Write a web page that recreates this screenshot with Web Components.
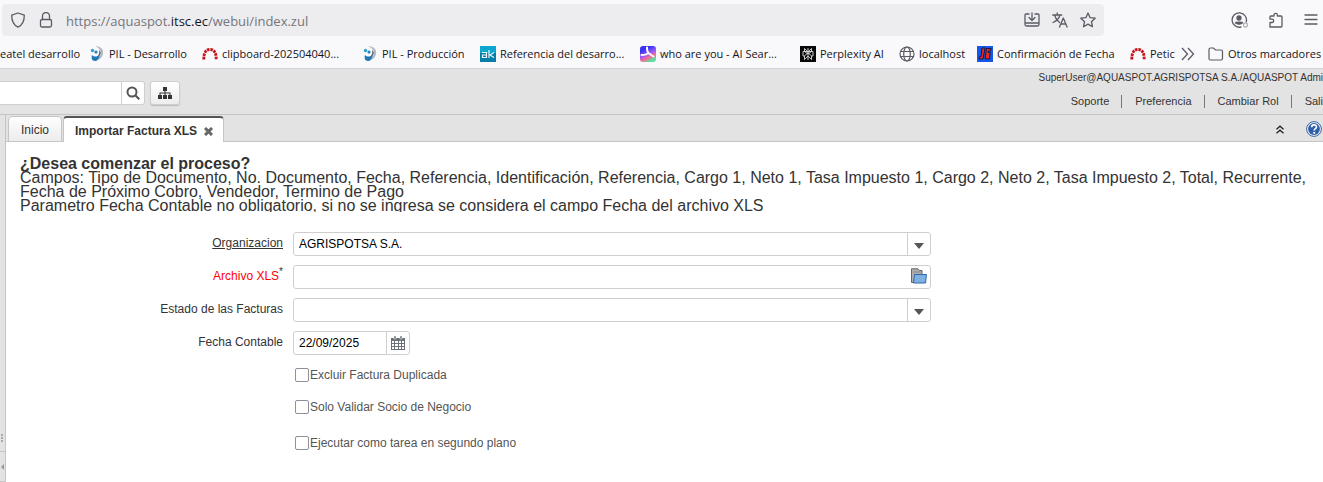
<!DOCTYPE html>
<html lang="es">
<head>
<meta charset="utf-8">
<title>Importar Factura XLS</title>
<style>
  html, body {
    height: 100%;
  }
  body {
    margin: 0;
    display: flex;
    flex-direction: column;
    overflow: hidden;
    background: #fff;
    color: #333;
    font: 12px/14px "Liberation Sans", Arial, sans-serif;
  }
  .area {
    flex: 1;
    display: flex;
    min-height: 0;
  }
  process-panel {
    flex: 1;
    min-width: 0;
  }
</style>
</head>
<body>
  <browser-bar></browser-bar>
  <bookmarks-bar>
    <bookmark-item>eatel desarrollo</bookmark-item>
    <bookmark-item icon="pil">PIL - Desarrollo</bookmark-item>
    <bookmark-item icon="arch">clipboard-202504040...</bookmark-item>
    <bookmark-item icon="pil">PIL - Producción</bookmark-item>
    <bookmark-item icon="ak">Referencia del desarro...</bookmark-item>
    <bookmark-item icon="search">who are you - AI Sear...</bookmark-item>
    <bookmark-item icon="perplexity">Perplexity AI</bookmark-item>
    <bookmark-item icon="globe">localhost</bookmark-item>
    <bookmark-item icon="fecha">Confirmación de Fecha</bookmark-item>
    <bookmark-item icon="arch">Petic</bookmark-item>
    <bookmark-item icon="more"></bookmark-item>
    <bookmark-item icon="folder">Otros marcadores</bookmark-item>
  </bookmarks-bar>
  <app-header user="SuperUser@AQUASPOT.AGRISPOTSA S.A./AQUASPOT Admi">
    <a href="#soporte">Soporte</a>
    <a href="#preferencia">Preferencia</a>
    <a href="#rol">Cambiar Rol</a>
    <a href="#salir">Sali</a>
  </app-header>
  <div class="area">
    <side-rail></side-rail>
    <process-panel>
      <span slot="title">¿Desea comenzar el proceso?</span>
      <span slot="help">Campos: Tipo de Documento, No. Documento, Fecha, Referencia, Identificación, Referencia, Cargo 1, Neto 1, Tasa Impuesto 1, Cargo 2, Neto 2, Tasa Impuesto 2, Total, Recurrente, Fecha de Próximo Cobro, Vendedor, Termino de Pago<br>Parametro Fecha Contable no obligatorio, si no se ingresa se considera el campo Fecha del archivo XLS</span>
      <form-field kind="list" label="Organizacion" value="AGRISPOTSA S.A." linked></form-field>
      <form-field kind="file" label="Archivo XLS" required></form-field>
      <form-field kind="list" label="Estado de las Facturas"></form-field>
      <form-field kind="date" label="Fecha Contable" value="22/09/2025"></form-field>
      <check-field slot="checks" label="Excluir Factura Duplicada"></check-field>
      <check-field slot="checks" label="Solo Validar Socio de Negocio"></check-field>
      <check-field slot="run" label="Ejecutar como tarea en segundo plano"></check-field>
    </process-panel>
  </div>

<script>
  const BOOKMARK_ICONS = {
    pil: `<svg width="16" height="16" viewBox="0 0 16 16"><path d="M6 0c6 0 9 4 8 8-1 4-4 6-8 7 4-3 6-5 6-8S10 2 6 0z" fill="#b4bac1"/><path d="M10 4c3 2 2 5-1 7l-3 2c3-3 5-5 4-9z" fill="#5b6670"/><circle cx="3.500" cy="4.500" r="1.700" fill="#2b9fd8"/><circle cx="7" cy="6" r="1.600" fill="#2b7fb8"/><path d="M3 9c2 2 5 2 8 0-1 4-3 6-5 6-3 0-4-3-3-6z" fill="#1f78b4"/></svg>`,
    arch: `<svg width="16" height="16" viewBox="0 0 16 16"><path d="M1.800 13.500c0-7 2-10 6.200-10s6.200 3 6.200 10" fill="none" stroke="#c4161c" stroke-width="2.900" stroke-dasharray="2.600 .8"/></svg>`,
    ak: `<svg width="16" height="16" viewBox="0 0 16 16"><rect width="16" height="16" fill="#067ea8"/><path d="M0 0h16v7H0z" fill="#0ba5cf"/><path d="M2 6.500h4.500v5H2.500V9h4M9 4v8M14 6.500 10 9l4 2.500" fill="none" stroke="#e8f8ff" stroke-width="1.200"/></svg>`,
    search: `<svg width="16" height="16" viewBox="0 0 16 16"><defs><linearGradient id="g" x1="0" y1="0" x2=".5" y2="1"><stop offset=".3" stop-color="#3a35f2"/><stop offset=".6" stop-color="#a05bf8"/><stop offset=".8" stop-color="#ff6a8a"/><stop offset="1" stop-color="#5ae0a0"/></linearGradient></defs><rect width="16" height="16" rx="3" fill="url(#g)"/><path d="M7 1.500c0 3 .5 5 2 6l4.500 3M8 7C7 8.500 5 9 1.500 9" fill="none" stroke="#fff" stroke-width="2" stroke-linecap="round"/></svg>`,
    perplexity: `<svg width="16" height="16" viewBox="0 0 16 16"><rect width="16" height="16" fill="#090909"/><path d="M8 2v12M4.500 2.500v3L8 8l3.500-2.500v-3L8 6 4.500 2.500M3 5.500h10v4.500h-1.500v3.500L8 10l-3.500 3.500V10H3zM4.500 10 8 6.500l3.500 3.500" fill="none" stroke="#ddd" stroke-width=".9"/></svg>`,
    globe: `<svg width="16" height="16" viewBox="0 0 16 16" fill="none" stroke="#5b5b66" stroke-width="1.200"><circle cx="8" cy="8" r="7"/><ellipse cx="8" cy="8" rx="3.300" ry="7"/><path d="M1.500 5.500h13M1.500 10.500h13"/></svg>`,
    fecha: `<svg width="16" height="16" viewBox="0 0 16 16"><rect width="16" height="16" fill="#1557e8"/><path d="M5 2h3L6 13H2l.5-2.500H4zM9.500 2.500H14L13.500 5h-2l-.3 1.500h2L12.500 13H8z" fill="#e8291c" stroke="#14184a"/></svg>`,
    more: `<svg width="16" height="16" viewBox="0 0 16 16" fill="none" stroke="#5b5b66" stroke-width="1.300"><path d="m2 2 5.500 6L2 14M8 2l5.500 6L8 14"/></svg>`,
    folder: `<svg width="16" height="16" viewBox="0 0 16 16" fill="none" stroke="#5b5b66" stroke-width="1.200"><path d="M1 12.500v-9C1 2.500 1.500 2 2.500 2h3l2 2h5.500c1 0 1.500.5 1.500 1.500v7c0 1-.5 1.500-1.500 1.500H2.500C1.500 14 1 13.500 1 12.500z"/></svg>`
  };

  class BrowserBar extends HTMLElement {
    constructor() {
      super();
      this.attachShadow({ mode: 'open' }).innerHTML = `
        <style>
          :host { display: flex; height: 40px; box-sizing: border-box; padding: 4px 0 4px 2px; background: #f9f9fb; }
          .url { flex: 1; display: flex; align-items: center; gap: 12px; box-sizing: border-box; padding: 0 8px; height: 32px; border-radius: 4px; background: #ededf0; }
          .address { flex: 1; margin: 0; padding-top: 2px; color: #75757b; font: 13px/20px "Open Sans", "Noto Sans", sans-serif; }
          b { color: #15141a; font-weight: 400; }
          .tools { display: flex; align-items: center; gap: 19px; padding: 0 4px 0 127px; }
          button { display: flex; padding: 0; border: 0; background: none; }
          svg { display: block; fill: none; stroke: #5b5b66; stroke-width: 1.3; stroke-linejoin: round; stroke-linecap: round; }
        </style>
        <div class="url">
          <button aria-label="Protección"><svg width="16" height="16" viewBox="0 0 16 16"><path d="M8 1 14.300 3.200c0 6-1.800 9.800-6.300 12C3.500 13 1.700 9.200 1.700 3.200z"/></svg></button>
          <button aria-label="Conexión segura"><svg width="16" height="16" viewBox="0 0 16 16"><rect x="2.500" y="7.500" width="11" height="7.500" rx="1.500"/><path d="M4.500 7.500V4a3.500 3.500 0 0 1 7 0v3.500"/></svg></button>
          <p class="address">https://aquaspot.<b>itsc.ec</b>/webui/index.zul</p>
          <button aria-label="Instalar"><svg width="16" height="16" viewBox="0 0 16 16"><path d="M5 2H2C1.300 2 1 2.500 1 3v9.500c0 1 .5 1.500 1.500 1.500h11c1 0 1.500-.5 1.500-1.500V3c0-.5-.3-1-1-1h-3M1 11h14M8 1v7.500M5 5.500l3 3 3-3"/></svg></button>
          <button aria-label="Traducir"><svg width="16" height="16" viewBox="0 0 16 16"><path d="M.7 3h9M5.200 1v2M2.500 3c1 3.500 3 6 5 7.500M8 3c-1 3.500-3.500 6-7 7.500M7.500 15l3.800-9 3.800 9M8.800 12h5"/></svg></button>
          <button aria-label="Marcar página"><svg width="16" height="16" viewBox="0 0 16 16"><path d="m8 1 2.100 4.700 5.100.5-3.800 3.500 1.100 5L8 12.100l-4.500 2.600 1.100-5L.8 6.200l5.100-.5z"/></svg></button>
        </div>
        <div class="tools">
          <button aria-label="Cuenta"><svg width="18" height="16" viewBox="0 0 18 16"><path d="M10 15a7.200 7.200 0 1 1 5.200-5"/><circle cx="8" cy="6" r="2" fill="#5b5b66"/><path d="M4.500 11c0-1 7-1 7 0-1 1.500-6 1.500-7 0z" fill="#5b5b66"/><circle cx="14.500" cy="13" r="2" stroke="#b5b5bd"/></svg></button>
          <button aria-label="Extensiones"><svg width="16" height="16" viewBox="0 0 16 16"><path d="M2 15V10.500h2a1.700 1.700 0 0 0 0-3.400H2V5c0-.6.400-1 1-1h3V3a1.700 1.700 0 0 1 3.400 0v1H13c.6 0 1 .4 1 1v9c0 .6-.4 1-1 1z"/></svg></button>
          <button aria-label="Menú"><svg width="16" height="16" viewBox="0 0 16 16"><path d="M2 3h12M2 7.500h12M2 12h12"/></svg></button>
        </div>`;
    }
  }
  customElements.define('browser-bar', BrowserBar);

  class BookmarksBar extends HTMLElement {
    constructor() {
      super();
      this.attachShadow({ mode: 'open' }).innerHTML = `
        <style>
          :host {
            display: grid;
            grid-template-columns: 89px 113px 160px 118px 160px 160px 99px 78px 153px 50px 28px 1fr;
            align-items: center;
            height: 29px;
            box-sizing: border-box;
            border-bottom: 1px solid #d5d5d8;
            background: #f9f9fb;
          }
        </style>
        <slot></slot>`;
    }
  }
  customElements.define('bookmarks-bar', BookmarksBar);

  class BookmarkItem extends HTMLElement {
    constructor() {
      super();
      this.attachShadow({ mode: 'open' });
    }

    connectedCallback() {
      this.shadowRoot.innerHTML = `
        <style>
          :host { display: block; min-width: 0; }
          a { display: flex; align-items: center; gap: 4px; color: #15141a; font: 11px/16px "Open Sans", "Noto Sans", sans-serif; text-decoration: none; white-space: nowrap; }
          svg { flex: none; display: block; }
        </style>
        <a href="#">${BOOKMARK_ICONS[this.getAttribute('icon')] || ''}<slot></slot></a>`;
    }
  }
  customElements.define('bookmark-item', BookmarkItem);

  class AppHeader extends HTMLElement {
    constructor() {
      super();
      this.attachShadow({ mode: 'open' });
    }

    connectedCallback() {
      this.shadowRoot.innerHTML = `
        <style>
          :host { display: flex; justify-content: space-between; height: 46px; box-sizing: border-box; border-bottom: 1px solid #c5c5c5; background: #e3e3e3; }
          .search { display: flex; align-items: center; padding-top: 2px; }
          input { width: 122px; height: 24px; box-sizing: border-box; padding: 0 4px; border: 1px solid #cfcfcf; border-left: 0; background: #fff; font: inherit; }
          button { display: flex; align-items: center; justify-content: center; box-sizing: border-box; height: 24px; padding: 0; border: 1px solid #cfcfcf; background: #fff; }
          .find { width: 23px; border-left: 0; border-radius: 0 3px 3px 0; }
          .tree { width: 30px; margin-left: 5px; border-radius: 3px; background: linear-gradient(#fff, #ededed); box-shadow: 0 1px 1px #bbb; }
          .user { text-align: right; font-size: 10px; margin: 2px 0 10px; white-space: nowrap; }
          nav { display: flex; justify-content: flex-end; }
          ::slotted(a) { padding: 0 12px 0 13px; color: #333; text-decoration: none; border-right: 1px solid #777; font-size: 11px; line-height: 13px; }
          ::slotted(a:last-child) { padding-right: 0; border: 0; }
        </style>
        <div class="search">
          <input type="text" aria-label="Buscar">
          <button class="find" aria-label="Buscar"><svg width="14" height="14" viewBox="0 0 14 14" fill="none" stroke="#555" stroke-width="2"><circle cx="6" cy="6" r="4.500"/><path d="m9.300 9.300 4 4"/></svg></button>
          <button class="tree" aria-label="Menú"><svg width="14" height="12" viewBox="0 0 14 12" fill="#333"><path d="M5 0h4v4H7.500v1.500h5V8H14v4h-4V8h1.500V6.500h-4V8H9v4H5V8h1.500V6.500h-4V8H4v4H0V8h1.500V5.500h5V4H5z"/></svg></button>
        </div>
        <div>
          <p class="user">${this.getAttribute('user')}</p>
          <nav><slot></slot></nav>
        </div>`;
    }
  }
  customElements.define('app-header', AppHeader);

  class SideRail extends HTMLElement {
    constructor() {
      super();
      this.attachShadow({ mode: 'open' }).innerHTML = `
        <style>
          :host { display: flex; flex-direction: column; justify-content: flex-end; width: 6px; box-sizing: border-box; border-right: 1px solid #c5c5c5; background: #e3e3e3; }
          svg { display: block; }
          .grip { margin-bottom: 8px; }
          .fold { box-sizing: border-box; height: 31px; padding-top: 12px; border-top: 1px solid #c5c5c5; border-bottom: 1px solid #c5c5c5; }
        </style>
        <svg class="grip" width="5" height="9" viewBox="0 0 5 9" fill="#aaa"><path d="M1 0h2v2H1zM1 3h2v2H1zM1 6h2v2H1z"/></svg>
        <div class="fold"><svg width="5" height="6" viewBox="0 0 5 6" fill="#999"><path d="M4 0v6L1 3z"/></svg></div>`;
    }
  }
  customElements.define('side-rail', SideRail);

  class ProcessPanel extends HTMLElement {
    constructor() {
      super();
      this.attachShadow({ mode: 'open' }).innerHTML = `
        <style>
          :host { display: block; background: #fff; }
          .tabs { display: flex; align-items: flex-end; gap: 1px; height: 27px; box-sizing: border-box; padding: 0 1px 0 2px; background: #e3e3e3; box-shadow: inset 0 -1px #c5c5c5; }
          .tab { display: flex; align-items: center; gap: 7px; box-sizing: border-box; height: 26px; padding: 2px 12px 0; border: 1px solid #c5c5c5; border-radius: 4px 4px 0 0; background: linear-gradient(#fefefe, #ececec); color: #333; font: inherit; }
          .active { padding: 2px 10px 0 11px; border-top: 2px solid #555; border-bottom: 0; background: #fff; font-weight: 700; }
          .tools { display: flex; align-items: center; gap: 22px; height: 26px; margin-left: auto; }
          .tools button { display: flex; padding: 0; border: 0; background: none; }
          svg { display: block; }
          .body { padding: 14px; }
          .text { height: 56px; box-sizing: border-box; padding-top: 1px; margin-bottom: 20px; overflow: hidden; font-size: 16px; line-height: 14px; }
          h1 { margin: 0; font: inherit; font-weight: 700; }
          p { margin: 0; }
          .fields { display: grid; gap: 9px; }
          .checks { display: grid; gap: 8px; margin: 8px 0 12px; }
        </style>
        <div class="tabs">
          <button class="tab">Inicio</button>
          <button class="tab active">Importar Factura XLS <svg width="9" height="9" viewBox="0 0 9 9" stroke="#666" stroke-width="3"><path d="m1 1 7 7M8 1 1 8"/></svg></button>
          <div class="tools">
            <button aria-label="Contraer"><svg width="8" height="9" viewBox="0 0 8 9" fill="none" stroke="#222" stroke-width="1.300"><path d="m.5 4.200 3.500-3 3.500 3M.5 8.200l3.500-3 3.500 3"/></svg></button>
            <button aria-label="Ayuda"><svg width="16" height="16" viewBox="0 0 16 16"><circle cx="8" cy="8" r="7.400" fill="#eaf1fa" stroke="#3b64a0"/><circle cx="8" cy="8" r="5.900" fill="#2f5fa8"/><path d="M5.700 6.200c0-3 4.800-3 4.800-.2 0 1.700-2.300 1.700-2.300 3.500" fill="none" stroke="#fff" stroke-width="1.700"/><circle cx="8.200" cy="11.800" r="1.100" fill="#fff"/></svg></button>
          </div>
        </div>
        <div class="body">
          <div class="text">
            <h1><slot name="title"></slot></h1>
            <p><slot name="help"></slot></p>
          </div>
          <div class="fields"><slot></slot></div>
          <div class="checks"><slot name="checks"></slot></div>
          <slot name="run"></slot>
        </div>`;
    }
  }
  customElements.define('process-panel', ProcessPanel);

  const ROW_STYLE = `
    :host { display: grid; grid-template-columns: 263fr 638fr 368fr; column-gap: 10px; height: 24px; }`;

  class FormField extends HTMLElement {
    constructor() {
      super();
      this.attachShadow({ mode: 'open' });
    }

    connectedCallback() {
      this.render();
    }

    control() {
      const value = this.getAttribute('value') || '';
      switch (this.getAttribute('kind')) {
        case 'list':
          return `
            <select id="field"><option>${value}</option></select>
            <span class="arrow"><svg width="10" height="6" viewBox="0 0 10 6"><path d="M0 0h10L5 6z" fill="#555"/></svg></span>`;
        case 'file':
          return `
            <input id="field" type="text" value="${value}">
            <button class="browse" aria-label="Examinar"><svg width="16" height="16" viewBox="0 0 16 16"><path d="M.5 14.500V.8h6.500l1.500 1.700h2.500v12z" fill="#b0b0b0" stroke="#666"/><path d="M2 4h7.500" stroke="#888"/><path d="M3.500 6.500h12l-1 8.500H2.500z" fill="#7fb0e2" stroke="#2f68ad"/></svg></button>`;
        default:
          return `
            <input id="field" type="text" value="${value}">
            <button aria-label="Calendario"><svg width="14" height="14" viewBox="0 0 14 14"><path d="M0 2h14v12H0z" fill="#6b7078"/><path d="M3 0h2v3H3zM9 0h2v3H9z" fill="#666" stroke="#fff" stroke-width=".5"/><path d="M1 5h2v2H1zM4 5h3v2H4zM8 5h2v2H8zM11 5h2v2h-2zM1 8h2v2H1zM4 8h3v2H4zM8 8h2v2H8zM11 8h2v2h-2zM1 11h2v2H1zM4 11h3v2H4zM8 11h2v2H8zM11 11h2v2h-2z" fill="#fff"/></svg></button>`;
      }
    }

    render() {
      const kind = this.getAttribute('kind');
      this.shadowRoot.innerHTML = `
        <style>
          ${ROW_STYLE}
          label { padding-top: 4px; text-align: right; white-space: nowrap; }
          :host([linked]) label { text-decoration: underline; }
          :host([required]) label { color: #f00; }
          sup { color: #333; font-size: 10px; line-height: 0; }
          .box { display: flex; box-sizing: border-box; min-width: 0; border: 1px solid #cfcfcf; border-radius: 3px; background: #fff; }
          .box.date { width: 117px; }
          input, select { flex: 1; min-width: 0; padding: 0 5px; border: 0; background: none; appearance: none; color: #000; font: inherit; outline: 0; }
          button, .arrow { display: flex; align-items: center; justify-content: center; box-sizing: border-box; width: 23px; padding: 0; border: 0; border-left: 1px solid #cfcfcf; background: none; }
          .arrow { padding-top: 3px; }
          .browse { border-left: 0; padding-bottom: 2px; }
          svg { display: block; }
        </style>
        <label for="field">${this.getAttribute('label')}${this.hasAttribute('required') ? '<sup>*</sup>' : ''}</label>
        <div class="box ${kind}">${this.control()}</div>`;
    }
  }
  customElements.define('form-field', FormField);

  class CheckField extends HTMLElement {
    constructor() {
      super();
      this.attachShadow({ mode: 'open' });
    }

    connectedCallback() {
      this.shadowRoot.innerHTML = `
        <style>
          ${ROW_STYLE}
          div { grid-column: 2; display: flex; align-items: center; gap: 1px; padding-left: 2px; color: #555; }
          input { appearance: none; width: 14px; height: 14px; box-sizing: border-box; margin: 0; border: 1px solid #8f8f9d; border-radius: 2px; background: #fff; }
        </style>
        <div><input id="check" type="checkbox"><label for="check">${this.getAttribute('label')}</label></div>`;
    }
  }
  customElements.define('check-field', CheckField);
</script>
</body>
</html>
